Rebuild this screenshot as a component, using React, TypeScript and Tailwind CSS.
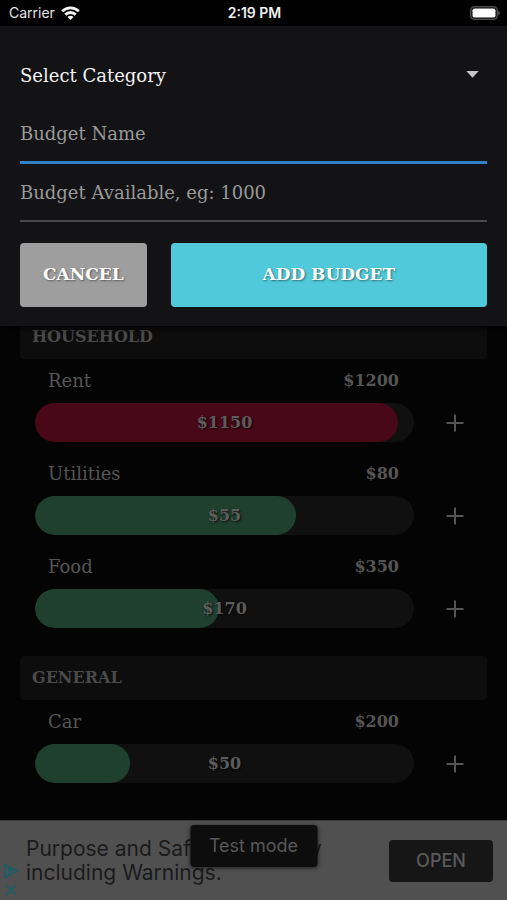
import { useState } from "react";

type Budget = { name: string; total: number; spent: number; fill: string };
type Category = { title: string; budgets: Budget[] };

const GREEN = "bg-[#1f402f]";
const RED = "bg-[#480818]";

const categories: Category[] = [
  {
    title: "HOUSEHOLD",
    budgets: [
      { name: "Rent", total: 1200, spent: 1150, fill: RED },
      { name: "Utilities", total: 80, spent: 55, fill: GREEN },
      { name: "Food", total: 350, spent: 170, fill: GREEN },
    ],
  },
  {
    title: "GENERAL",
    budgets: [{ name: "Car", total: 200, spent: 50, fill: GREEN }],
  },
];

function StatusBar() {
  return (
    <header className="grid h-[26px] grid-cols-3 items-center bg-black pr-[7px] pl-[9px] font-['Inter',sans-serif] text-sm text-[#e4e4e4]">
      <div className="flex items-center gap-1.5">
        <span>Carrier</span>
        <svg className="h-[14px] w-[19px]" viewBox="0 0 19 14" fill="none" stroke="#f4f4f4" strokeWidth="2.9" aria-hidden="true">
          <path d="M1.2 5.2C5.8.7 13.2.7 17.8 5.2" />
          <path d="M4.3 8.6c2.9-2.8 7.5-2.8 10.4 0" />
          <path d="M9.5 14 6.5 11c1.6-1.6 4.4-1.6 6 0Z" fill="#f4f4f4" stroke="none" />
        </svg>
      </div>
      <span className="text-center font-semibold whitespace-nowrap text-[#f0f0f0]">2:19 PM</span>
      <svg className="h-[14px] w-[30px] justify-self-end" viewBox="0 0 30 14" aria-hidden="true">
        <rect x="0.75" y="0.75" width="26.5" height="12.5" rx="3.5" fill="none" stroke="#4c4c4c" strokeWidth="1.5" />
        <rect x="2.5" y="2.5" width="23" height="9" rx="1.8" fill="#fff" />
        <path d="M28.3 4.7c1.9.7 1.9 3.9 0 4.6Z" fill="#666" />
      </svg>
    </header>
  );
}

function BudgetForm() {
  const [category, setCategory] = useState("");
  const input =
    "block h-[58px] w-full bg-transparent text-lg text-white outline-none placeholder:text-[#9a9a9a] placeholder:opacity-100";
  const button =
    "h-16 rounded text-[17px] font-bold text-white [text-shadow:1px_1px_2px_rgba(0,0,0,0.45)]";
  return (
    <form
      className="relative z-10 bg-[#131315] px-5 pt-6 pb-[19px] shadow-[0_2px_6px_#000]"
      onSubmit={(e) => e.preventDefault()}
    >
      <div className="relative">
        <select
          aria-label="Category"
          value={category}
          onChange={(e) => setCategory(e.target.value)}
          className="block h-[52px] w-full appearance-none bg-transparent text-lg text-[#f2f2f2] outline-none"
        >
          <option value="">Select Category</option>
          <option value="household">Household</option>
          <option value="general">General</option>
        </select>
        <svg className="pointer-events-none absolute top-[21px] right-2 h-[7px] w-[13px]" viewBox="0 0 13 7" aria-hidden="true">
          <path d="M.3 0h12.4L6.5 6.8Z" fill="#c4c4c4" />
        </svg>
      </div>
      <input aria-label="Budget name" placeholder="Budget Name" className={`${input} mt-1 border-b-3 border-[#2f82c8]`} />
      <input aria-label="Budget available" inputMode="numeric" placeholder="Budget Available, eg: 1000" className={`${input} border-b-2 border-[#4b4b4d]`} />
      <div className="mt-[21px] flex gap-6">
        <button type="button" className={`${button} flex-[2_1_0%] bg-[#9e9e9e]`}>CANCEL</button>
        <button type="submit" className={`${button} flex-[5_1_0%] bg-[#50c9da]`}>ADD BUDGET</button>
      </div>
    </form>
  );
}

function BudgetRow({ name, total, spent, fill }: Budget) {
  return (
    <li className="flex items-end pr-[7px] pb-[10px] pl-[15px]">
      <div className="flex-1">
        <div className="flex h-11 items-center justify-between pr-[15px] pl-[13px] text-lg text-[#555]">
          <span>{name}</span>
          <span className="text-base font-bold">${total}</span>
        </div>
        <div className="relative h-[39px] overflow-hidden rounded-full bg-[#101010]">
          <div className={`h-full rounded-full ${fill}`} style={{ width: `${(spent / total) * 100}%` }} />
          <span className="absolute inset-0 flex items-center justify-center text-base font-bold text-[#5c5c5c] [text-shadow:1px_1px_2px_rgba(0,0,0,0.8)]">
            ${spent}
          </span>
        </div>
      </div>
      <button type="button" aria-label={`Add expense to ${name}`} className="ml-4 flex h-[39px] w-[50px] items-center justify-center">
        <svg className="size-[18px]" viewBox="0 0 18 18" fill="none" stroke="#555" strokeWidth="2" aria-hidden="true">
          <path d="M9 .5v17M.5 9h17" />
        </svg>
      </button>
    </li>
  );
}

function AdBanner() {
  return (
    <aside className="relative mt-auto flex h-20 items-center justify-between border-t border-[#3a3a3a] bg-[#505050] pr-3.5 pl-[26px] font-['Inter',sans-serif]">
      <p className="text-[21px] leading-6 whitespace-nowrap text-[#1b1b1b]">
        Purpose and Safety Summary
        <br />
        including Warnings.
      </p>
      <button type="button" className="h-[42px] w-[104px] shrink-0 rounded bg-[#161616] text-lg font-medium text-[#5a5a5a]">
        OPEN
      </button>
      <div className="absolute bottom-1 left-1 flex flex-col gap-1.5">
        <svg className="h-[14px] w-[14px]" viewBox="0 0 14 14" fill="none" stroke="#17606a" strokeWidth="1.6" aria-hidden="true">
          <path d="M3.8 13.2H1V.8l12.2 6.3L5 11.3V5l4 2.1" />
        </svg>
        <svg className="h-3 w-[14px]" viewBox="0 0 14 12" fill="none" stroke="#17606a" strokeWidth="1.7" aria-hidden="true">
          <path d="m2 1 10 10M12 1 2 11" />
        </svg>
      </div>
      <div role="status" className="absolute top-1 left-1/2 flex h-[42px] w-[127px] -translate-x-1/2 items-center justify-center rounded bg-[#0d0d0d] text-lg text-[#585858] shadow-[0_1px_4px_rgba(0,0,0,0.6)]">
        Test mode
      </div>
    </aside>
  );
}

export default function App() {
  return (
    <div className="flex min-h-screen flex-col bg-[#040404] font-['DejaVu_Serif',serif]">
      <StatusBar />
      <BudgetForm />
      <main className="-mt-[11px] px-5">
        {categories.map((category) => (
          <section key={category.title} className="mb-[18px]">
            <h2 className="flex h-11 items-center rounded bg-[#0d0d0d] px-3 text-base font-bold text-[#4a4a4a]">
              {category.title}
            </h2>
            <ul>
              {category.budgets.map((budget) => (
                <BudgetRow key={budget.name} {...budget} />
              ))}
            </ul>
          </section>
        ))}
      </main>
      <AdBanner />
    </div>
  );
}
